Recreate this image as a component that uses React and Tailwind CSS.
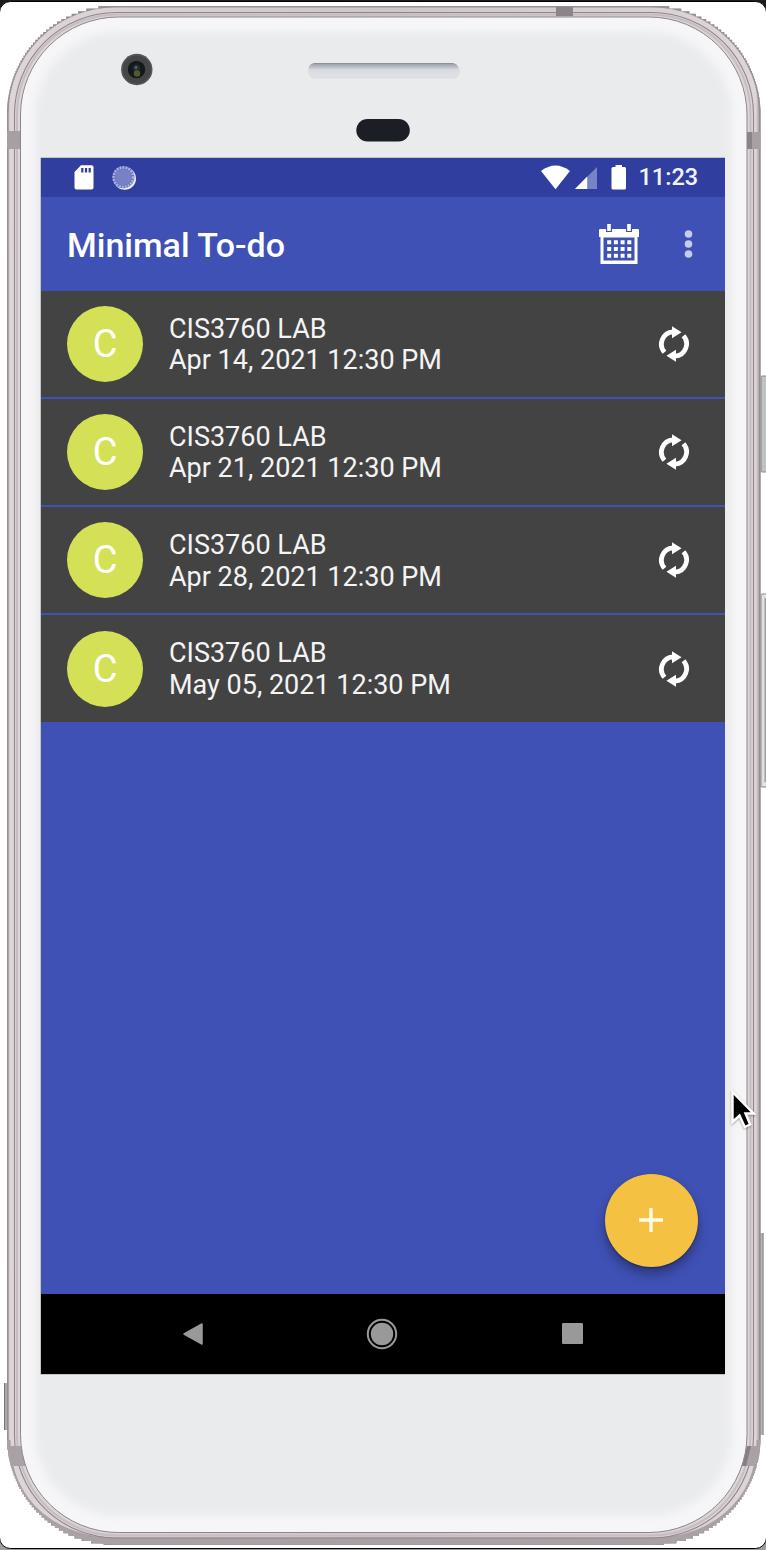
import React from "react";

const items = [
  { title: "CIS3760 LAB", date: "Apr 14, 2021 12:30 PM" },
  { title: "CIS3760 LAB", date: "Apr 21, 2021 12:30 PM" },
  { title: "CIS3760 LAB", date: "Apr 28, 2021 12:30 PM" },
  { title: "CIS3760 LAB", date: "May 05, 2021 12:30 PM" },
];

// Outline of a rounded rectangle whose corners are cut in small steps.
function steppedOutline(x0, y0, x1, y1, r) {
  const left = [];
  const right = [];
  const step = 2.6;
  const inset = (d) => (d >= r ? 0 : r - Math.sqrt(r * r - (r - d) * (r - d)));
  const add = (ya, yb, d) => {
    const i = inset(d);
    left.push([x0 + i, ya], [x0 + i, yb]);
    right.push([x1 - i, ya], [x1 - i, yb]);
  };
  for (let d = 0; d < r; d += step) add(y0 + d, y0 + Math.min(d + step, r), d + step / 2);
  for (let d = r; d > 0; d -= step) add(y1 - d, y1 - Math.max(d - step, 0), Math.max(d - step / 2, 0.6));
  return "M" + left.concat(right.reverse()).map((p) => p[0].toFixed(1) + " " + p[1].toFixed(1)).join("L") + "Z";
}

const outline = steppedOutline(7, 6, 760.5, 1545, 108);

function Device() {
  return (
    <svg className="absolute inset-0" width="766" height="1550" viewBox="0 0 766 1550" aria-hidden="true">
      <defs>
        <linearGradient id="edge" x1="0" x2="1" y1="0" y2="0">
          <stop offset="0" stopColor="#a79fa3" />
          <stop offset="0.004" stopColor="#ddd5d8" />
          <stop offset="0.5" stopColor="#cfc6ca" />
          <stop offset="0.994" stopColor="#ddd5d8" />
          <stop offset="1" stopColor="#948c90" />
        </linearGradient>
        <linearGradient id="speaker" x1="0" x2="0" y1="0" y2="1">
          <stop offset="0" stopColor="#969aa5" />
          <stop offset="0.25" stopColor="#b4b8c1" />
          <stop offset="0.5" stopColor="#d8dbe0" />
          <stop offset="1" stopColor="#e0e2e6" />
        </linearGradient>
        <filter id="soft" x="-5%" y="-5%" width="110%" height="110%">
          <feGaussianBlur stdDeviation="4" />
        </filter>
        <clipPath id="body">
          <path d={outline} />
        </clipPath>
      </defs>
      <rect width="766" height="30" fill="#1c1c1e" />
      <rect y="1500" width="766" height="50" fill="#9d9d9d" />
      <rect x="-0.5" y="1.5" width="767" height="1547" rx="11" fill="#fff" stroke="#000" />
      <rect x="4" y="1383" width="4" height="47" fill="#a9a9a9" />
      <rect x="4" y="1383" width="1" height="47" fill="#777" />
      <rect x="760" y="1233" width="3.5" height="202" fill="#b5b3b4" />
      <rect x="762.5" y="1233" width="1" height="202" fill="#858585" />
      <rect x="761" y="376" width="8" height="96" rx="1" fill="#c0c3c3" stroke="#858888" />
      <rect x="761" y="594" width="8" height="193" rx="1" fill="#dfe2df" stroke="#858885" />
      <rect x="764.5" y="598" width="1.5" height="184" fill="#9da09d" />
      <path d={outline} fill="url(#edge)" />
      <g clipPath="url(#body)">
        <rect x="7" y="6" width="753.5" height="1539" rx="108" fill="none" stroke="#978f93" strokeWidth="3" />
        <path d="M7 1440C7 1507 60 1541 115 1541H652C708 1541 760 1507 760 1440" fill="none" stroke="#aaa1a6" strokeWidth="7" />
        <rect x="14.5" y="12.5" width="739" height="1525.5" rx="102" fill="none" stroke="#8f878b" strokeWidth="1.1" />
        <rect x="17" y="14.5" width="733.5" height="1521" rx="100" fill="none" stroke="#c6bdc1" strokeWidth="2" />
        <rect x="7" y="131" width="15" height="18" fill="#a69fa3" />
        <rect x="745" y="132" width="16" height="17" fill="#a8a1a4" />
        <rect x="745" y="132" width="7" height="17" fill="#8b8487" />
        <path d="M7 1446H21L26 1466H7Z" fill="#aaa1a6" />
        <path d="M761 1446H747L742 1466H761Z" fill="#aaa1a6" />
        <path d="M747 1446H751L746 1466H742Z" fill="#857d81" />
        <rect x="556" y="7" width="17" height="9" fill="#8c8488" />
      </g>
      <rect x="20.5" y="17" width="726.5" height="1515.5" rx="98" fill="#f6f6f8" stroke="#8d868a" strokeWidth="1" />
      <rect x="35" y="32" width="697" height="1484" rx="84" fill="#eaebec" filter="url(#soft)" />

      <circle cx="136.8" cy="69.5" r="15.7" fill="#53575a" />
      <circle cx="136.8" cy="69.5" r="14" fill="#43474a" />
      <circle cx="136.5" cy="69.5" r="8.7" fill="#15191b" />
      <circle cx="136.5" cy="68" r="3.5" fill="#252d3a" />
      <circle cx="136" cy="67.5" r="1.2" fill="#657080" />
      <ellipse cx="137" cy="73.5" rx="3.2" ry="3.3" fill="#575a24" />

      <rect x="308" y="64" width="152" height="14.5" rx="7" fill="#dcdee2" />
      <rect x="308.5" y="63" width="150" height="13.5" rx="6" fill="url(#speaker)" />
      <path d="M314 63.5H453" stroke="#8c909b" />
      <rect x="356.3" y="119" width="53.5" height="22.6" rx="11.3" fill="#1b1e25" />
      <rect x="40.5" y="157.5" width="684.5" height="1217" fill="#9b9ba0" />
    </svg>
  );
}

function StatusBar() {
  return (
    <div className="flex h-[39px] shrink-0 items-center bg-[#303f9f] pl-[33px] pr-[27px]">
      <svg width="20" height="25" viewBox="0 0 20 25">
        <path d="M7 .3H17.5Q19.5 .3 19.5 2.3V22.5Q19.5 24.5 17.5 24.5H2.5Q.5 24.5 .5 22.5V7Z" fill="#fff" />
        <path d="M8.3 3V7.5M12 3V7.5M15.7 3V7.5" stroke="#303f9f" strokeWidth="2.2" />
      </svg>
      <svg className="ml-[17px]" width="26" height="26" viewBox="0 0 26 26">
        <circle cx="13.7" cy="13.5" r="11.3" fill="#eceefa" />
        <circle cx="12.4" cy="12.2" r="11" fill="#6873bd" />
        <circle cx="12.4" cy="12.2" r="9.8" fill="none" stroke="#aab1de" strokeWidth="2.6" strokeDasharray="1.8 1.2" />
        <circle cx="12.4" cy="12.2" r="8" fill="#7781c5" />
      </svg>
      <svg className="ml-auto" width="29" height="25" viewBox="0 0 29 25">
        <path d="M0 6Q14.5 -5 29 6L14.5 24.3Z" fill="#fff" />
      </svg>
      <svg className="ml-[4px]" width="24" height="24" viewBox="0 0 24 24">
        <path d="M23 1V23H1Z" fill="#7883c5" />
        <path d="M13.2 10.4V23H1Z" fill="#fff" />
      </svg>
      <svg className="ml-[13px]" width="16" height="25" viewBox="0 0 16 25">
        <path d="M4.5 0H11V2H13.5Q15 2 15 3.5V23Q15 24.5 13.5 24.5H2Q.5 24.5 .5 23V3.5Q.5 2 2 2H4.5Z" fill="#fff" />
      </svg>
      <span className="ml-[12px] w-[59px] whitespace-nowrap text-[23.5px] font-medium leading-none text-[#f3f4fb]">11:23</span>
    </div>
  );
}

function CalendarIcon() {
  return (
    <svg width="42" height="42" viewBox="0 0 42 42">
      <path d="M2 6H40Q41 6 41 7V14H39.5V41H2.5V14H1V7Q1 6 2 6Z" fill="#fff" />
      <rect x="5.5" y="14.5" width="31" height="23" fill="#3f51b5" />
      <path d="M8 1V9H14V1M28 1V9H34V1" fill="#3f51b5" />
      <path d="M9.2 1H12.8V8H9.2ZM29.2 1H32.8V8H29.2Z" fill="#fff" />
      <path d="M9.2 19.3H34M9.2 26H34M9.2 32.7H34" stroke="#fff" strokeWidth="4" strokeDasharray="4 2.7" />
    </svg>
  );
}

function RepeatIcon() {
  return (
    <svg width="32" height="36" viewBox="0 0 32 36">
      <path d="M6.5 26.3A12.4 12.4 0 0 1 15 5.8M25.5 9.7A12.4 12.4 0 0 1 17 30.2" fill="none" stroke="#fff" strokeWidth="4.8" />
      <path d="M14 .2L23.6 6.2L14 12.2ZM18 35.8L8.4 29.8L18 23.8Z" fill="#fff" />
    </svg>
  );
}

function TodoRow({ item }) {
  return (
    <li className="flex h-[106.3px] shrink-0 items-center bg-[#434343] pl-[26px] pr-[35px]">
      <div className="flex size-[76px] items-center justify-center rounded-full bg-[#d4e157] text-[38px] leading-none text-white">
        C
      </div>
      <div className="ml-[26px] pt-[3px] text-[27px] leading-[31.6px] text-[#f4f4f4]">
        <p className="whitespace-nowrap">{item.title}</p>
        <p className="whitespace-nowrap">{item.date}</p>
      </div>
      <div className="ml-auto">
        <RepeatIcon />
      </div>
    </li>
  );
}

export default function App() {
  return (
    <div className="relative h-[1550px] w-[766px] overflow-hidden bg-white font-['Roboto',sans-serif]">
      <Device />
      <div className="relative pl-[41px] pt-[158px]">
        <main className="flex h-[1216px] w-[683.5px] flex-col bg-[#3f51b5]">
          <StatusBar />
          <header className="flex h-[93.5px] shrink-0 items-center pl-[26px] pr-[32px]">
            <h1 className="whitespace-nowrap pt-[3px] text-[34px] font-medium leading-none text-white">Minimal To-do</h1>
            <div className="ml-auto">
              <CalendarIcon />
            </div>
            <svg className="ml-[44px]" width="9" height="28" viewBox="0 0 9 28">
              <circle cx="4.5" cy="4" r="3.8" fill="#c5cbea" />
              <circle cx="4.5" cy="14" r="3.8" fill="#c5cbea" />
              <circle cx="4.5" cy="24" r="3.8" fill="#c5cbea" />
            </svg>
          </header>
          <ul className="flex flex-col gap-[2px]">
            {items.map((item) => (
              <TodoRow key={item.date} item={item} />
            ))}
          </ul>
          <div className="flex flex-1 items-end justify-end pb-[27px] pr-[27px]">
            <button
              aria-label="Add"
              className="flex size-[93px] items-center justify-center rounded-full bg-[#f5c142] shadow-[0_7px_12px_rgba(0,0,0,0.32),0_1px_2px_rgba(0,0,0,0.35)]"
            >
              <svg width="24" height="24" viewBox="0 0 24 24">
                <path d="M12 0V24M0 12H24" stroke="#fffbea" strokeWidth="3.4" />
              </svg>
            </button>
          </div>
          <nav className="flex h-[80.5px] shrink-0 items-center justify-between bg-black pl-[142px] pr-[142px]">
            <svg width="20" height="22" viewBox="0 0 20 22">
              <path d="M19 1V21L1 11Z" fill="#999" stroke="#999" strokeWidth="1.5" strokeLinejoin="round" />
            </svg>
            <svg width="32" height="32" viewBox="0 0 32 32">
              <circle cx="16" cy="16" r="14.2" fill="none" stroke="#999" strokeWidth="2" />
              <circle cx="16" cy="16" r="11.2" fill="#999" />
            </svg>
            <svg width="21" height="21" viewBox="0 0 21 21">
              <rect width="21" height="21" rx="1.2" fill="#999" />
            </svg>
          </nav>
        </main>
      </div>
      <svg className="absolute left-[728px] top-[1086px] drop-shadow-[0_1px_1px_rgba(0,0,0,0.35)]" width="28" height="44" viewBox="0 0 28 44">
        <path d="M4.5 6V36L11.5 29.5L16.8 41L22.2 38.5L17.5 27.5H25.5Z" fill="#000" stroke="#fff" strokeWidth="2.4" />
      </svg>
    </div>
  );
}
